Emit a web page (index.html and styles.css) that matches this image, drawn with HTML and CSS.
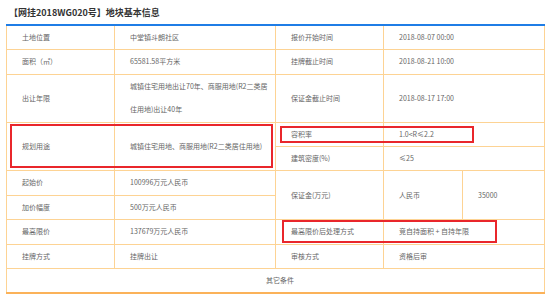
FILE: index.html
```html
<!DOCTYPE html>
<html lang="zh-CN">
<head>
<meta charset="utf-8">
<title>地块基本信息</title>
<link rel="stylesheet" href="styles.css">
</head>
<body>
<div class="page">
  <div class="title">【网挂2018WG020号】地块基本信息</div>
  <div class="table-wrap">
    <table class="info">
      <colgroup>
        <col class="c-label"><col class="c-value"><col class="c-label"><col class="c-v1"><col class="c-v2">
      </colgroup>
      <tbody>
        <tr><td class="lbl">土地位置</td><td>中堂镇斗朗社区</td><td class="lbl">报价开始时间</td><td colspan="2">2018-08-07 00:00</td></tr>
        <tr><td class="lbl">面积（㎡）</td><td>65581.58平方米</td><td class="lbl">挂牌截止时间</td><td colspan="2">2018-08-21 10:00</td></tr>
        <tr><td class="lbl">出让年限</td><td>城镇住宅用地出让70年、商服用地(R2二类居住用地)出让40年</td><td class="lbl">保证金截止时间</td><td colspan="2">2018-08-17 17:00</td></tr>
        <tr><td class="lbl" rowspan="2">规划用途</td><td rowspan="2">城镇住宅用地、商服用地(R2二类居住用地)</td><td class="lbl">容积率</td><td colspan="2">1.0&lt;R≤2.2</td></tr>
        <tr><td class="lbl">建筑密度(%)</td><td colspan="2">≤25</td></tr>
        <tr><td class="lbl">起始价</td><td>100996万元人民币</td><td class="lbl" rowspan="2">保证金(万元)</td><td rowspan="2">人民币</td><td rowspan="2">35000</td></tr>
        <tr><td class="lbl">加价幅度</td><td>500万元人民币</td></tr>
        <tr><td class="lbl">最高限价</td><td>137679万元人民币</td><td class="lbl">最高限价后处理方式</td><td colspan="2">竞自持面积 + 自持年限</td></tr>
        <tr><td class="lbl">挂牌方式</td><td>挂牌出让</td><td class="lbl">审核方式</td><td colspan="2">资格后审</td></tr>
        <tr class="last"><td class="center" colspan="5">其它条件</td></tr>
      </tbody>
    </table>
    <div class="mark mark-use"></div>
    <div class="mark mark-far"></div>
    <div class="mark mark-cap"></div>
  </div>
</div>
</body>
</html>
```

FILE: styles.css
```css
* { box-sizing: border-box; }
html, body { margin: 0; padding: 0; background: #fff; }
body {
  font-family: "Noto Sans CJK SC", "Noto Sans", sans-serif;
  color: #666;
}
.page {
  padding: 0 9px 0 6px;
}
.title {
  padding: 3px 0 0 3px;
  height: 24px;
  line-height: 20px;
  font-size: 9px;
  font-weight: bold;
  color: #333;
}
.table-wrap {
  position: relative;
  width: 538px;
}
.info {
  width: 538px;
  border-collapse: collapse;
  table-layout: fixed;
  font-size: 7px;
  border-top: 2px solid #1f7de6;
  border-bottom: 2px solid #fbb259;
}
.c-label { width: 108px; }
.c-value { width: 161px; }
.c-v1 { width: 79px; }
.c-v2 { width: 82px; }
.info td {
  border: 1px solid #fdd394;
  padding: 0 5px 0 15px;
  line-height: 23.4px;
  vertical-align: middle;
  color: #666;
}
.info tr:first-child td { border-top: 2px solid #1f7de6; }
.info tr.last td { border-bottom: 2px solid #fbb259; }
.info td.center {
  text-align: center;
  padding-left: 14px;
}
.mark {
  position: absolute;
  border: 2px solid #e9262b;
}
.mark-use { left: 4px; top: 100px; width: 263px; height: 44px; }
.mark-far { left: 274px; top: 102px; width: 194px; height: 17px; }
.mark-cap { left: 276px; top: 196px; width: 215px; height: 23px; }
```
